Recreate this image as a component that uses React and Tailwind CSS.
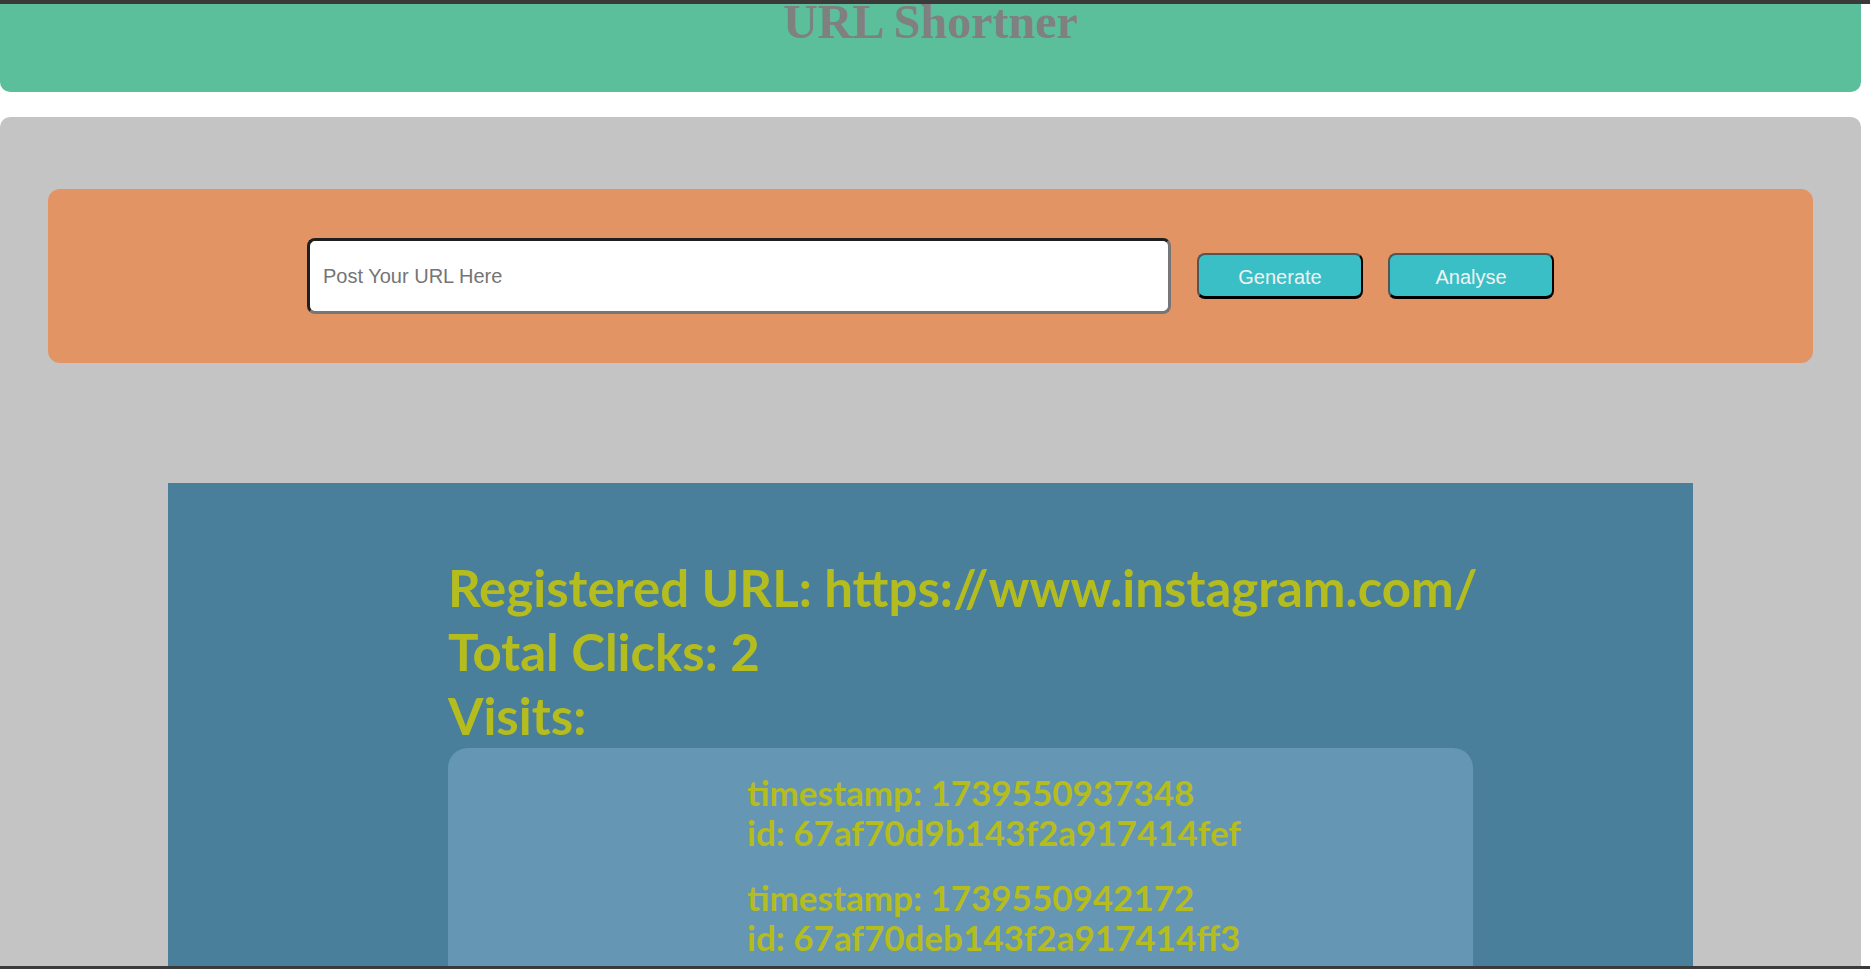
import React, { useState } from 'react';

const visits = [
  { timestamp: 1739550937348, _id: '67af70d9b143f2a917414fef' },
  { timestamp: 1739550942172, _id: '67af70deb143f2a917414ff3' },
];

const App = () => {
  const [url, setUrl] = useState('');

  return (
    <div className="min-h-screen bg-white">
      <div className="h-[4px] bg-[#3a3a3a]" />
      <div className="w-[1861px]">
        <header className="h-[88px] bg-[#5bbf9c] rounded-b-[10px] flex justify-center overflow-visible">
          <h1 className="-mt-[6px] text-[48px] leading-[48px] font-bold text-[#808080] font-['Liberation_Serif',serif]">
            URL Shortner
          </h1>
        </header>

        <main className="mt-[25px] bg-[#c4c4c4] rounded-t-[10px] px-[48px] pt-[72px] pb-[60px]">
          <div className="bg-[#e29465] rounded-[12px] h-[174px] flex items-center justify-center gap-[25px] font-['Liberation_Sans',sans-serif]">
            <input
              type="text"
              value={url}
              onChange={(e) => setUrl(e.target.value)}
              placeholder="Post Your URL Here"
              className="w-[864px] h-[76px] bg-white rounded-[8px] border-[3px] border-t-[#1f1f1f] border-l-[#1f1f1f] border-b-[#767676] border-r-[#767676] px-[13px] text-[20px] text-black placeholder:text-[#757575] outline-none"
            />
            <button className="w-[166px] h-[46px] ml-[1px] pt-[2px] bg-[#3abfc6] rounded-[8px] border-2 border-b-[3px] border-t-[#555] border-l-[#555] border-b-black border-r-black text-[20px] text-[#f2f2f2]">
              Generate
            </button>
            <button className="w-[166px] h-[46px] pt-[2px] bg-[#3abfc6] rounded-[8px] border-2 border-b-[3px] border-t-[#555] border-l-[#555] border-b-black border-r-black text-[20px] text-[#f2f2f2]">
              Analyse
            </button>
          </div>

          <section className="mt-[120px] mx-auto w-[1525px] bg-[#4a7f9b] pl-[280px] pt-[73px] pb-[80px] font-['Lato',sans-serif] font-bold text-[#b5bd1e]">
            <div className="w-[1025px]">
              <div className="text-[51px] leading-[64px] whitespace-nowrap">Registered URL: https://www.instagram.com/</div>
              <div className="text-[51px] leading-[64px]">Total Clicks: 2</div>
              <div className="text-[51px] leading-[64px]">Visits:</div>
              <ul className="bg-[#6596b4] rounded-[20px] pl-[299px] pt-[24px] pb-[40px] flex flex-col gap-[25px]">
                {visits.map((v) => (
                  <li key={v._id} className="text-[35px] leading-[40px]">
                    <div>timestamp: {v.timestamp}</div>
                    <div>id: {v._id}</div>
                  </li>
                ))}
              </ul>
            </div>
          </section>
        </main>
      </div>
      <div className="fixed bottom-0 left-0 right-0 h-[3px] bg-[#3a3a3a]" />
    </div>
  );
};

export default App;
